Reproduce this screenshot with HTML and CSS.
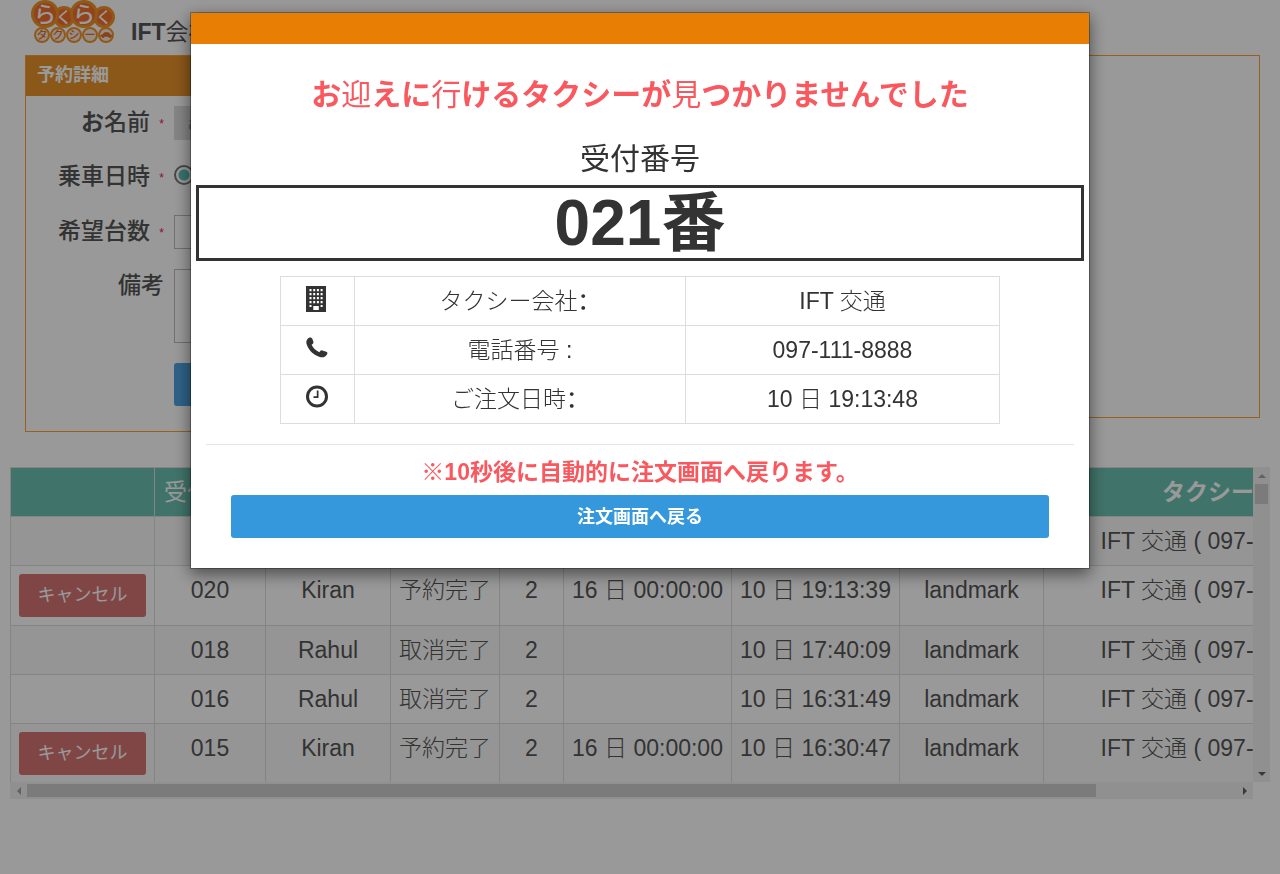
FILE: index.html
```html
<!DOCTYPE html>
<html lang="ja">
<head>
<meta charset="utf-8">
<title>らくらくタクシー</title>
<link rel="stylesheet" href="styles.css">
</head>
<body>
<header class="site-header">
  <svg class="logo" viewBox="0 0 84 44" role="img" aria-label="らくらくタクシー">
    <g class="logo-big">
      <circle cx="33" cy="17" r="9.500"/><circle cx="73" cy="17" r="9.500"/>
      <circle cx="14" cy="14" r="12.500"/><circle cx="53" cy="14" r="12.500"/>
    </g>
    <g class="logo-small">
      <circle cx="11" cy="35" r="7"/><circle cx="27" cy="35" r="7"/><circle cx="43" cy="35" r="7"/><circle cx="59" cy="35" r="7"/><circle cx="75" cy="35" r="7"/>
    </g>
    <g class="logo-kana">
      <text x="14" y="22" font-size="22">ら</text><text x="33" y="23" font-size="16">く</text>
      <text x="53" y="22" font-size="22">ら</text><text x="73" y="23" font-size="16">く</text>
    </g>
    <g class="logo-kata">
      <text x="11" y="39" font-size="11">タ</text><text x="27" y="39" font-size="11">ク</text><text x="43" y="39" font-size="11">シ</text><text x="59" y="39" font-size="11">ー</text>
    </g>
    <path class="logo-car" d="M69 36.500q0-2 2.500-2.200l2-2h4l2.200 2.200q1.800.3 1.800 2.200h-1.500a1.300 1.300 0 0 1-2.600 0h-4a1.300 1.300 0 0 1-2.600 0z"/>
  </svg>
  <h1 class="company">IFT<span class="light">会社</span></h1>
</header>

<main>
  <div class="panels">
    <section class="panel form-panel">
      <h2 class="panel-title">予約詳細</h2>
      <form class="form">
        <label class="label" for="name"><b>お</b>名前 <span class="req">*</span></label>
        <input class="field" id="name" type="text" value="a" disabled>
        <label class="label" for="now">乗車日時 <span class="req">*</span></label>
        <div class="radio-row"><input class="radio" id="now" type="radio" checked></div>
        <label class="label" for="cars">希望台数 <span class="req">*</span></label>
        <input class="field" id="cars" type="text">
        <label class="label" for="memo">備考</label>
        <textarea class="field memo" id="memo"></textarea>
        <button class="submit" type="button" aria-label="注文"></button>
      </form>
    </section>
    <section class="panel map-panel"></section>
  </div>

  <div class="scroller">
    <div class="viewport">
      <table class="orders">
        <colgroup><col class="c-act"><col class="c-no"><col class="c-name"><col class="c-state"><col class="c-cars"><col class="c-date"><col class="c-date"><col class="c-place"><col class="c-taxi"></colgroup>
        <thead>
          <tr><th></th><th class="light">受付番号</th><th></th><th></th><th></th><th></th><th></th><th></th><th>タクシー会社</th></tr>
        </thead>
        <tbody>
          <tr><td></td><td></td><td></td><td></td><td></td><td></td><td></td><td></td><td>IFT 交通 ( 097-111-8888 )</td></tr>
          <tr><td><button class="cancel" type="button">キャンセル</button></td><td>020</td><td>Kiran</td><td>予約完了</td><td>2</td><td>16 日 00:00:00</td><td>10 日 19:13:39</td><td>landmark</td><td>IFT 交通 ( 097-111-8888 )</td></tr>
          <tr><td></td><td>018</td><td>Rahul</td><td>取消完了</td><td>2</td><td></td><td>10 日 17:40:09</td><td>landmark</td><td>IFT 交通 ( 097-111-8888 )</td></tr>
          <tr><td></td><td>016</td><td>Rahul</td><td>取消完了</td><td>2</td><td></td><td>10 日 16:31:49</td><td>landmark</td><td>IFT 交通 ( 097-111-8888 )</td></tr>
          <tr><td><button class="cancel" type="button">キャンセル</button></td><td>015</td><td>Kiran</td><td>予約完了</td><td>2</td><td>16 日 00:00:00</td><td>10 日 16:30:47</td><td>landmark</td><td>IFT 交通 ( 097-111-8888 )</td></tr>
        </tbody>
      </table>
    </div>
    <div class="bar bar-v"><i class="arrow up"></i><i class="thumb"></i><i class="arrow down"></i></div>
    <div class="bar bar-h"><i class="arrow left"></i><i class="thumb"></i><i class="arrow right"></i></div>
  </div>
</main>

<div class="backdrop">
  <div class="modal" role="dialog" aria-modal="true" aria-labelledby="modal-title">
    <div class="modal-head"></div>
    <div class="modal-body">
      <h2 class="modal-title" id="modal-title">お<span class="light">迎</span>えに<span class="light">行</span>けるタクシーが<span class="light">見</span>つかりませんでした</h2>
      <p class="ticket-label">受付番号</p>
      <p class="ticket">021番</p>
      <table class="details">
        <colgroup><col class="d-icon"><col class="d-label"><col class="d-value"></colgroup>
        <tr>
          <td><svg class="icon" viewBox="0 0 24 28"><path fill-rule="evenodd" d="M2 1h20v26H2zM5.500 4v2.200h2V4zm3.700 0v2.200h2V4zm3.700 0v2.200h2V4zm3.700 0v2.200h2V4zM5.500 8v2.200h2V8zm3.700 0v2.200h2V8zm3.700 0v2.200h2V8zm3.700 0v2.200h2V8zM5.500 12v2.200h2V12zm3.700 0v2.200h2V12zm3.700 0v2.200h2V12zm3.700 0v2.200h2V12zM5.500 16v2.200h2V16zm3.700 0v2.200h2V16zm3.700 0v2.200h2V16zm3.700 0v2.200h2V16zM5.500 20v2h2v-2zm11.100 0v2h2v-2zM9.300 21v4h5.500v-4z"/></svg></td>
          <td>タクシー会社<span class="colon" lang="zh-CN">：</span></td><td>IFT 交通</td>
        </tr>
        <tr>
          <td><svg class="icon" viewBox="0 0 24 28"><path d="M3.500 5C5 3 7.500 3 8.400 5l1 2.700c.3 1-.1 1.800-.8 2.300l-1 .8c1.700 3.500 4.300 5.900 7.700 7.400l1-1.200c.5-.6 1.300-.8 2-.5l4 1.200c1.300.5 1.300 1.500.8 2.500-1.500 3-4.600 3.800-8 2.500C9 20.500 5.300 16.800 3 11.300 2 8.800 2 6.800 3.500 5z"/></svg></td>
          <td>電話番号 :</td><td>097-111-8888</td>
        </tr>
        <tr>
          <td><svg class="icon" viewBox="0 0 24 28"><circle class="ring" cx="13" cy="13.500" r="9.500"/><path d="M12.800 7.500h1.700v7.500H9.500v-1.700h3.300z"/></svg></td>
          <td>ご注文日時<span class="colon" lang="zh-CN">：</span></td><td>10 日 19:13:48</td>
        </tr>
      </table>
      <footer class="modal-foot">
        <p class="notice">※10秒後に自動的に注文画面へ戻ります。</p>
        <button class="back" type="button">注文画面へ戻る</button>
      </footer>
    </div>
  </div>
</div>
</body>
</html>
```
FILE: styles.css
```css
* { box-sizing: border-box; }
body {
  margin: 0;
  min-height: 100vh;
  overflow: hidden;
  background: #fff;
  color: #555;
  font: 23px/32px "Liberation Sans", "Noto Sans CJK JP", sans-serif;
}
h1, h2, p { margin: 0; }
button { font-family: inherit; border: 0; cursor: pointer; }

.site-header { display: flex; height: 55px; padding-left: 31px; gap: 16px; }
.logo { width: 84px; height: 44px; flex: none; }
.logo-big circle { fill: #f5702c; stroke: #f0942b; stroke-width: 3; }
.logo-small circle { fill: #fbe9dc; stroke: #f0942b; stroke-width: 2; }
.logo text { text-anchor: middle; font-family: "Noto Sans CJK JP", sans-serif; font-weight: 500; }
.logo-kana { fill: #fff; }
.logo-kata { fill: #e0702a; }
.logo-car { fill: #e0702a; }
.company { font-size: 23px; line-height: 32px; padding-top: 16px; white-space: nowrap; }

.panels { display: flex; align-items: flex-start; gap: 20px; padding: 0 20px 0 25px; height: 412px; }
.panel { border: 1px solid #ff9f33; flex: 1; }
.form-panel { height: 377px; }
.map-panel { height: 363px; }
.panel-title {
  height: 40px;
  padding: 0 11px;
  background: #e9932b;
  color: #fff;
  font-size: 18px;
  line-height: 38px;
}
.form {
  display: grid;
  grid-template-columns: 138px 1fr;
  grid-template-rows: 34px 35px 34px 74px 43px;
  column-gap: 10px;
  row-gap: 20px;
  padding: 10px 10px 0 0;
}
.label { text-align: right; font-weight: 500; white-space: nowrap; }
.req { margin-left: 3px; color: #e0254a; font-size: 12px; vertical-align: middle; }
.field {
  width: 100%;
  height: 34px;
  padding: 6px 13px;
  border: 1px solid #bbb;
  background: #fff;
  color: #999;
  font: 20px/22px "Liberation Sans", "Noto Sans CJK JP", sans-serif;
}
.field:disabled { background: #ddd; border-color: #ddd; }
.memo { height: 74px; resize: none; display: block; }
.radio-row { padding-top: 5px; line-height: 0; }
.radio {
  appearance: none;
  width: 20px;
  height: 20px;
  margin: 0;
  border: 2px solid #777;
  border-radius: 50%;
  background: radial-gradient(circle, #5fbfb2 5px, #fff 6px);
}
.submit { grid-column: 2; width: 160px; background: #4ea3e3; border-radius: 3px; }

.scroller {
  display: grid;
  grid-template-columns: minmax(0, 1fr) 17px;
  grid-template-rows: 315px 17px;
  margin: 0 10px;
}
.viewport { overflow: hidden; }
.orders {
  width: 1409px;
  border-collapse: collapse;
  table-layout: fixed;
  text-align: center;
}
.c-act { width: 144px; }
.c-no { width: 111px; }
.c-name { width: 125px; }
.c-state { width: 109px; }
.c-cars { width: 64px; }
.c-date { width: 168px; }
.c-place { width: 144px; }
.orders th, .orders td {
  height: 49px;
  padding: 8px;
  border: 1px solid #ddd;
  vertical-align: top;
  white-space: nowrap;
  font-weight: 300;
}
.orders th { background: #6cc1b1; color: #fff; font-weight: 700; }
.orders tbody tr:nth-child(odd) { background: #f9f9f9; }
.cancel {
  display: block;
  width: 100%;
  height: 43px;
  padding: 0 0 5px;
  border-radius: 3px;
  background: #d57575;
  color: #fff;
  font-size: 18px;
}
.bar { display: flex; align-items: center; background: #f1f1f1; }
.bar-v { flex-direction: column; }
.thumb { background: #cdcdcd; }
.arrow { width: 17px; height: 17px; display: grid; place-items: center; flex: none; }
.arrow::before { content: ""; border: 4px solid transparent; }
.up::before { border-bottom-color: #a3a3a3; border-top: 0; }
.down::before { border-top-color: #606060; border-bottom: 0; }
.left::before { border-right-color: #a3a3a3; border-left: 0; }
.right::before { border-left-color: #606060; border-right: 0; }
.bar-v .thumb { width: 13px; height: 20px; margin-bottom: auto; }
.bar-h .thumb { width: 86%; height: 13px; margin-right: auto; }

.backdrop {
  position: fixed;
  inset: 0;
  display: flex;
  justify-content: center;
  align-items: flex-start;
  padding-top: 12px;
  background: rgba(0, 0, 0, .4);
}
.modal {
  width: 900px;
  max-width: 100%;
  border: 1px solid rgba(0, 0, 0, .3);
  background: #fff;
  background-clip: padding-box;
  color: #333;
  text-align: center;
  box-shadow: 0 5px 15px rgba(0, 0, 0, .5);
}
.modal-head { height: 31px; background: #e87e04; }
.modal-body { padding: 29px 5px 30px; }
.modal-title { color: #f9585f; font-size: 30px; line-height: 44px; }
.modal-title .light, .company .light, .orders .light { font-weight: 400; }
.ticket-label { margin-top: 20px; font-size: 30px; line-height: 44px; }
.ticket {
  height: 76px;
  margin-top: 4px;
  border: 3px solid #333;
  font-size: 64px;
  font-weight: 700;
  line-height: 70px;
}
.details {
  width: 720px;
  max-width: 100%;
  margin: 15px auto 20px;
  border-collapse: collapse;
  table-layout: fixed;
}
.d-icon { width: 74px; }
.d-label { width: 331px; }
.details td { height: 49px; padding: 8px; border: 1px solid #ddd; font-weight: 300; }
.colon { font-family: "Noto Sans CJK SC", sans-serif; font-weight: 500; line-height: 16px; }
.icon { display: block; width: 24px; height: 28px; margin: -5px 0 0 15px; fill: #333; }
.ring { fill: none; stroke: #333; stroke-width: 3; }
.modal-foot { margin: 0 10px; padding: 11px 25px 0; border-top: 1px solid #e5e5e5; }
.notice { color: #f9585f; font-weight: 700; }
.back {
  display: block;
  width: 100%;
  height: 43px;
  margin-top: 7px;
  padding: 0 0 3px;
  border-radius: 3px;
  background: #3598dc;
  color: #fff;
  font-size: 18px;
  font-weight: 700;
}
```
